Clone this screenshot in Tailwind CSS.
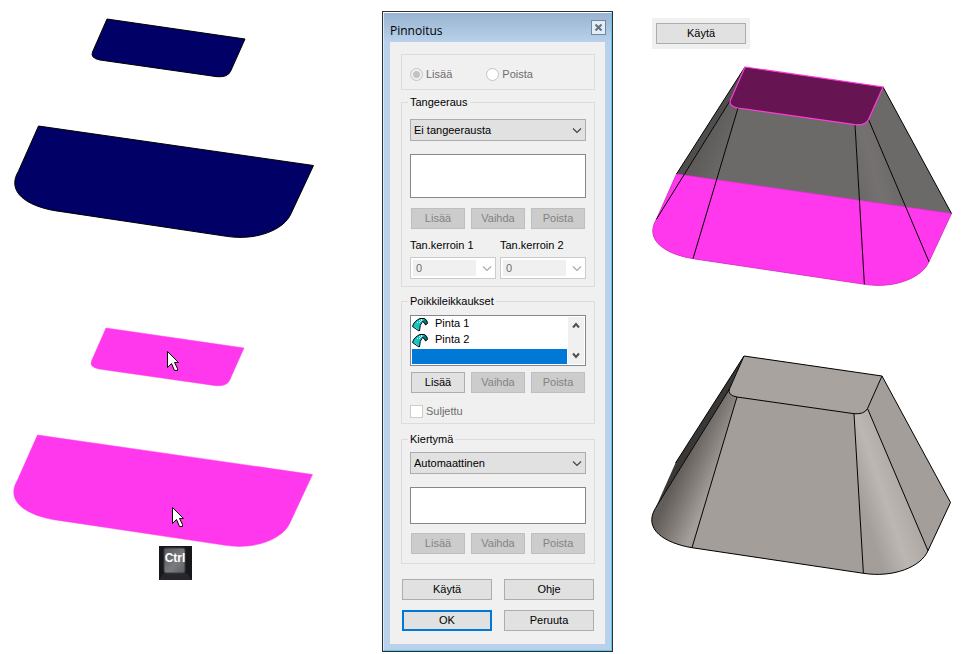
<!DOCTYPE html>
<html lang="fi">
<head>
    <meta charset="UTF-8">
    <meta name="viewport" content="width=device-width, initial-scale=1.0">
    <title>Pinnoitus</title>
    <script src="https://cdn.jsdelivr.net/npm/@tailwindcss/browser@4"></script>
</head>
<body class="bg-white text-black font-['Liberation_Sans',Arial,sans-serif] text-[11px] leading-[13px]">

    <!-- Shared shapes -->
    <svg class="hidden" aria-hidden="true">
        <defs>
            <path id="top-face" d="M107 19 L245 39 L230.5 71.5 Q227.5 77.5 217 76.7 L100 60 Q90 58 92.500 52 Z"/>
            <path id="base-face" d="M38.500 126 L313.500 165.500 L291 213.700 C284 230 256 241 226.400 236.300 L55 210.700 C27 206 6 192 18.400 171.300 Z"/>
            <path id="edges" d="M107 19 L38.500 126 M92.500 52 L18.400 171.300 M100 60 L55 210.700 M217 76.700 L226.400 236.300 M230.500 71.500 L291 213.700 M245 39 L313.500 165.500"/>
            <path id="left-face" d="M107 19 L38.500 126 L18.400 171.300 L92.500 52 Z"/>
            <path id="left-cone" d="M92.500 52 Q90 58 100 60 L55 210.700 C27 206 6 192 18.400 171.300 Z"/>
            <path id="front-face" d="M100 60 L217 76.700 L226.400 236.300 L55 210.700 Z"/>
            <path id="right-cone" d="M217 76.700 Q227.500 77.500 230.500 71.500 L291 213.700 C284 230 256 241 226.400 236.300 Z"/>
            <path id="right-face" d="M245 39 L313.500 165.500 L291 213.700 L230.500 71.500 Z"/>
            <path id="cursor" d="M.5 .5 V16.500 L4.500 12.500 L7.500 19.500 H10.500 V17.500 L7.500 11.500 H11.500 Z" fill="#fff" stroke="#000"/>
            <g id="surface">
                <path d="M.5 9.500 Q2 4 8 1.500 H12.500 L10.500 4.500 Q7.500 7.500 7.500 14 Q5 10.500 .5 9.500 Z" fill="#10c8c8"/>
                <path d="M12.500 1.500 Q15.500 3 15.500 6.500 L13.500 8 Q13 5.500 10.500 4.500 Z" fill="#087878"/>
                <path d="M7 3.500 h1 m1 0 h1 m-2 1 h1 m-4 1 h1 m1 0 h1 m1 -3 h1 m-5 3 h1" stroke="#c8ffff"/>
                <path d="M.5 9.500 Q2 4 8 1.500 M7.500 14 Q7.500 7.500 10.500 4.500 Q13 5.500 13.500 8 L15.500 6.500 Q15.500 3 12.500 1.500 H8 M.5 9.500 L7 14" fill="none" stroke="#000"/>
            </g>
            <path id="chevron" d="M1 1.500 L5 5.500 L9 1.500" fill="none" stroke="currentColor" stroke-width="1.200"/>
        </defs>
    </svg>

    <main class="grid grid-cols-[382fr_231px_365fr] items-start">

        <div class="pl-2 pt-3">
            <svg class="block w-[312px] h-[232px]" viewBox="8 12 312 232">
                <g fill="#000066" stroke="#000">
                    <use href="#top-face"/>
                    <use href="#base-face"/>
                </g>
            </svg>
            <svg class="mt-[77px] block w-[312px] h-[262px]" viewBox="9 12 312 262">
                <defs>
                    <linearGradient id="key" x1="0" y1="0" x2="1" y2="1">
                        <stop offset="0" stop-color="#56575a"/>
                        <stop offset=".6" stop-color="#7b7c7f"/>
                        <stop offset="1" stop-color="#5a5b5e"/>
                    </linearGradient>
                </defs>
                <g fill="#ff38ee" stroke="#ff38ee" stroke-width=".5">
                    <use href="#top-face"/>
                    <use href="#base-face"/>
                </g>
                <use href="#cursor" x="168" y="42"/>
                <use href="#cursor" x="173" y="198"/>
                <rect x="160" y="237" width="33" height="34" fill="#17181b"/>
                <path d="M160 271 L165 264 H188 L193 271 Z" fill="#26272b"/>
                <rect x="165" y="239" width="21" height="25" rx="2" fill="url(#key)" stroke="#3c3d41"/>
                <text x="176" y="253" text-anchor="middle" fill="#fff" class="font-['Liberation_Sans',sans-serif] font-bold text-[12px]">Ctrl</text>
            </svg>
        </div>

        <!-- Dialog -->
        <section class="mt-[11px] border border-[#2b3236] bg-[#b9d1ea]" aria-labelledby="dialog-title">
            <div class="border border-t-white border-l-[#dcebf8] border-r-[#5cc8ee] border-b-[#5cc8ee] px-1.5 pb-1.5">
                <header class="-mx-1.5 h-[29px] pl-1.5 pr-[5px] flex items-start justify-between bg-linear-to-b from-[#99b4d1] to-[#b9d1ea]">
                    <h1 id="dialog-title" class="pt-2.5 font-['Open_Sans','Segoe_UI',sans-serif] text-[12px] leading-4">Pinnoitus</h1>
                    <button type="button" aria-label="Sulje" class="mt-[7px] size-[15px] flex items-center justify-center border border-[#74869b] bg-[#e3edf7]">
                        <svg class="size-[7px]" viewBox="0 0 7 7"><path d="M.5 .5 L6.500 6.500 M6.500 .5 L.5 6.500" stroke="#607080" stroke-width="2"/></svg>
                    </button>
                </header>

                <form class="bg-[#f0f0f0] pt-3 pb-[13px] pl-[11px] pr-2.5">
                    <fieldset disabled class="flex h-9 items-center gap-[34px] border border-[#dcdcdc] px-2 pt-1 text-[#6d6d6d]">
                        <label class="flex items-center gap-[3px]">
                            <input type="radio" name="tila" checked class="size-[13px] appearance-none rounded-full border border-[#c3c3c3] bg-[#c3c3c3] bg-clip-content p-0.5">
                            Lisää
                        </label>
                        <label class="flex items-center gap-[3px]">
                            <input type="radio" name="tila" class="size-[13px] appearance-none rounded-full border border-[#c3c3c3] bg-white">
                            Poista
                        </label>
                    </fieldset>

                    <fieldset class="mt-1.5 border border-[#dcdcdc] px-2 pb-[7px]">
                        <legend class="-mx-0.5 px-0.5">Tangeeraus</legend>
                        <div class="relative mt-2.5">
                            <select aria-label="Tangeeraus" class="block h-[22px] w-full appearance-none border border-[#adadad] bg-[#e1e1e1] pl-[3px]">
                                <option>Ei tangeerausta</option>
                            </select>
                            <svg class="pointer-events-none absolute right-1 top-2 h-[7px] w-2.5 text-[#444]" viewBox="0 0 10 7"><use href="#chevron"/></svg>
                        </div>
                        <select size="3" aria-label="Tangeerauksen pinnat" class="mt-[13px] block h-11 w-full appearance-none border border-[#828790] bg-white"></select>
                        <div class="mt-2.5 grid grid-cols-3 gap-1.5 px-px">
                            <button type="button" disabled class="h-[21px] border border-[#bfbfbf] bg-[#cccccc] text-[#838383]">Lisää</button>
                            <button type="button" disabled class="h-[21px] border border-[#bfbfbf] bg-[#cccccc] text-[#838383]">Vaihda</button>
                            <button type="button" disabled class="h-[21px] border border-[#bfbfbf] bg-[#cccccc] text-[#838383]">Poista</button>
                        </div>
                        <div class="mt-2.5 grid grid-cols-2 gap-1">
                            <div>
                                <label for="kerroin-1" class="block">Tan.kerroin 1</label>
                                <div class="mt-[5px] flex h-[22px] items-center justify-between border border-[#cccccc] bg-white pl-0.5 pr-[3px]">
                                    <input id="kerroin-1" type="text" value="0" disabled class="h-4 w-[63px] bg-[#f0f0f0] pl-[3px] text-[#6d6d6d]">
                                    <svg class="h-[7px] w-2.5 text-[#aaa]" viewBox="0 0 10 7"><use href="#chevron"/></svg>
                                </div>
                            </div>
                            <div>
                                <label for="kerroin-2" class="block">Tan.kerroin 2</label>
                                <div class="mt-[5px] flex h-[22px] items-center justify-between border border-[#cccccc] bg-white pl-0.5 pr-[3px]">
                                    <input id="kerroin-2" type="text" value="0" disabled class="h-4 w-[63px] bg-[#f0f0f0] pl-[3px] text-[#6d6d6d]">
                                    <svg class="h-[7px] w-2.5 text-[#aaa]" viewBox="0 0 10 7"><use href="#chevron"/></svg>
                                </div>
                            </div>
                        </div>
                    </fieldset>

                    <fieldset class="mt-2 border border-[#dcdcdc] px-2 pb-[5px]">
                        <legend class="-mx-0.5 px-0.5">Poikkileikkaukset</legend>
                        <div class="mt-[7px] flex h-[51px] border border-[#828790] bg-white p-px">
                            <ul role="listbox" aria-label="Poikkileikkaukset" tabindex="0" class="flex-1">
                                <li role="option" class="flex h-4 items-start gap-[7px]">
                                    <svg class="h-[15px] w-4" viewBox="0 0 16 15"><use href="#surface"/></svg>
                                    Pinta 1
                                </li>
                                <li role="option" class="flex h-4 items-start gap-[7px]">
                                    <svg class="h-[15px] w-4" viewBox="0 0 16 15"><use href="#surface"/></svg>
                                    Pinta 2
                                </li>
                                <li role="option" aria-selected="true" class="h-[15px] bg-[#0078d7]"></li>
                            </ul>
                            <div class="ml-px flex w-4 flex-col items-center justify-between bg-[#f0f0f0] py-[5px] text-[#505050]">
                                <svg class="h-[7px] w-2" viewBox="0 0 8 7"><path d="M1 5.500 L4 2 L7 5.500" fill="none" stroke="currentColor" stroke-width="2"/></svg>
                                <svg class="h-[7px] w-2" viewBox="0 0 8 7"><path d="M1 1.500 L4 5 L7 1.500" fill="none" stroke="currentColor" stroke-width="2"/></svg>
                            </div>
                        </div>
                        <div class="mt-1.5 grid grid-cols-3 gap-1.5 px-px">
                            <button type="button" class="h-[21px] border border-[#adadad] bg-[#e1e1e1] hover:bg-[#e5f1fb]">Lisää</button>
                            <button type="button" disabled class="h-[21px] border border-[#bfbfbf] bg-[#cccccc] text-[#838383]">Vaihda</button>
                            <button type="button" disabled class="h-[21px] border border-[#bfbfbf] bg-[#cccccc] text-[#838383]">Poista</button>
                        </div>
                        <label class="mt-3 flex items-center gap-[3px] text-[#6d6d6d]">
                            <input type="checkbox" disabled class="size-[13px] appearance-none border border-[#cccccc] bg-white">
                            Suljettu
                        </label>
                    </fieldset>

                    <fieldset class="mt-[9px] border border-[#dcdcdc] px-2 pb-[9px]">
                        <legend class="-mx-0.5 px-0.5">Kiertymä</legend>
                        <div class="relative mt-1.5">
                            <select aria-label="Kiertymä" class="block h-[22px] w-full appearance-none border border-[#adadad] bg-[#e1e1e1] pl-[3px]">
                                <option>Automaattinen</option>
                            </select>
                            <svg class="pointer-events-none absolute right-1 top-2 h-[7px] w-2.5 text-[#444]" viewBox="0 0 10 7"><use href="#chevron"/></svg>
                        </div>
                        <select size="2" aria-label="Kiertymän käyrät" class="mt-[13px] block h-[37px] w-full appearance-none border border-[#828790] bg-white"></select>
                        <div class="mt-[9px] grid grid-cols-3 gap-1.5 px-px">
                            <button type="button" disabled class="h-[21px] border border-[#bfbfbf] bg-[#cccccc] text-[#838383]">Lisää</button>
                            <button type="button" disabled class="h-[21px] border border-[#bfbfbf] bg-[#cccccc] text-[#838383]">Vaihda</button>
                            <button type="button" disabled class="h-[21px] border border-[#bfbfbf] bg-[#cccccc] text-[#838383]">Poista</button>
                        </div>
                    </fieldset>

                    <div class="mt-[15px] grid grid-cols-2 gap-x-3 gap-y-2.5 px-px">
                        <button type="button" class="h-[21px] border border-[#adadad] bg-[#e1e1e1] hover:bg-[#e5f1fb]">Käytä</button>
                        <button type="button" class="h-[21px] border border-[#adadad] bg-[#e1e1e1] hover:bg-[#e5f1fb]">Ohje</button>
                        <button type="submit" class="h-[21px] border-2 border-[#0078d7] bg-[#e1e1e1] hover:bg-[#e5f1fb]">OK</button>
                        <button type="button" class="h-[21px] border border-[#adadad] bg-[#e1e1e1] hover:bg-[#e5f1fb]">Peruuta</button>
                    </div>
                </form>
            </div>
        </section>

        <div class="pl-8 pt-[18px]">
            <div class="ml-[7px] w-[98px] bg-[#f0f0f0] px-1 py-[5px]">
                <button type="button" class="block h-[21px] w-full border border-[#adadad] bg-[#e1e1e1] hover:bg-[#e5f1fb]">Käytä</button>
            </div>

            <!-- Preview of the loft -->
            <svg class="mt-[11px] block w-[312px] h-[232px]" viewBox="7 12 312 232">
                <defs>
                    <linearGradient id="dim-left" gradientUnits="userSpaceOnUse" x1="48" y1="130" x2="78" y2="143">
                        <stop offset="0" stop-color="#5c5b5a"/>
                        <stop offset="1" stop-color="#6b6a68"/>
                    </linearGradient>
                    <linearGradient id="dim-right" gradientUnits="userSpaceOnUse" x1="222" y1="150" x2="262" y2="140">
                        <stop offset="0" stop-color="#6b6a68"/>
                        <stop offset=".5" stop-color="#757170"/>
                        <stop offset="1" stop-color="#6b6a68"/>
                    </linearGradient>
                </defs>
                <use href="#left-face" fill="#4f4e4d"/>
                <use href="#left-cone" fill="url(#dim-left)"/>
                <use href="#front-face" fill="#6b6a68"/>
                <use href="#right-cone" fill="url(#dim-right)"/>
                <use href="#right-face" fill="#6b6a68"/>
                <use href="#base-face" fill="#ff38ee" stroke="#e030d0" stroke-width=".8"/>
                <use href="#edges" fill="none" stroke="#000"/>
                <use href="#top-face" fill="#661452" stroke="#ff38d8" stroke-width="1.200"/>
            </svg>

            <!-- Finished solid -->
            <svg class="mt-[57px] block w-[312px] h-[232px]" viewBox="8 12 312 232">
                <defs>
                    <linearGradient id="lit-left" gradientUnits="userSpaceOnUse" x1="44" y1="128" x2="78" y2="143">
                        <stop offset="0" stop-color="#625d59"/>
                        <stop offset=".5" stop-color="#827c78"/>
                        <stop offset="1" stop-color="#a39e99"/>
                    </linearGradient>
                    <linearGradient id="lit-right" gradientUnits="userSpaceOnUse" x1="221" y1="160" x2="268" y2="144">
                        <stop offset="0" stop-color="#a39e99"/>
                        <stop offset=".5" stop-color="#bcb7b3"/>
                        <stop offset="1" stop-color="#aca7a3"/>
                    </linearGradient>
                </defs>
                <use href="#left-face" fill="#393836"/>
                <use href="#left-cone" fill="url(#lit-left)"/>
                <use href="#front-face" fill="#a39e99"/>
                <use href="#right-cone" fill="url(#lit-right)"/>
                <use href="#right-face" fill="#a39e99"/>
                <path d="M18.400 171.300 C6 192 27 206 55 210.700 L226.400 236.300 C256 241 284 230 291 213.700 L313.500 165.500" fill="none" stroke="#000"/>
                <use href="#edges" fill="none" stroke="#000"/>
                <use href="#top-face" fill="#a8a39f" stroke="#000"/>
            </svg>
        </div>
    </main>
</body>
</html>
